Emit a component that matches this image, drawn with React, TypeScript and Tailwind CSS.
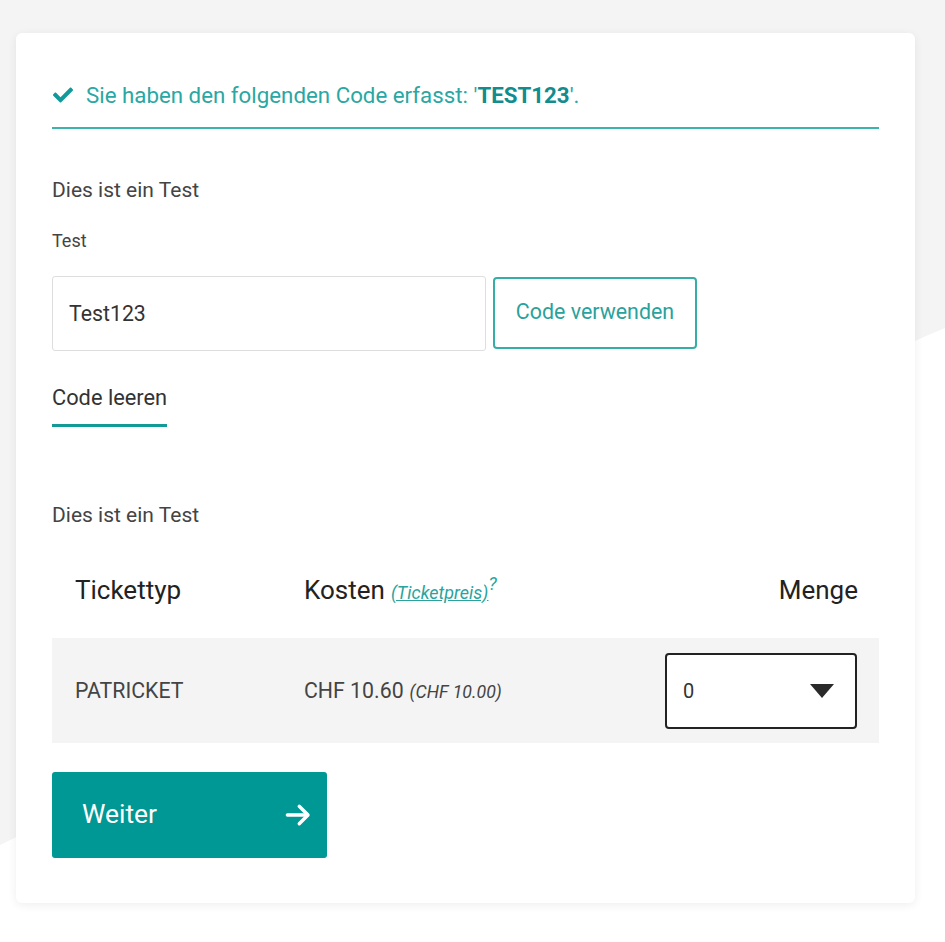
import React from "react";
import { FaCheck } from "react-icons/fa";

export default function App() {
  return (
    <div className="relative w-[945px] h-[942px] overflow-hidden bg-[#f4f4f4]" style={{ fontFamily: "Roboto, 'Liberation Sans', sans-serif" }}>
      <svg className="absolute inset-0" width="945" height="942" viewBox="0 0 945 942">
        <path d="M945 328 C 700 430, 300 700, 0 845 L0 942 L945 942 Z" fill="#ffffff" />
      </svg>
      <div className="relative pt-[33px] pl-[16px]">
        <div className="w-[899px] bg-white rounded-[6px] shadow-[0_2px_10px_rgba(0,0,0,0.07)] px-[36px] pt-[50px] pb-[45px]">
          <div className="flex items-center h-[24px] pl-[1px]">
            <FaCheck className="text-[#12999a] w-[20px] h-[20px] mr-[13px]" />
            <span className="text-[22.3px] leading-[24px] text-[#2aa7a2]">
              Sie haben den folgenden Code erfasst: '<span className="font-bold text-[#128c8c]">TEST123</span>'.
            </span>
          </div>
          <div className="mt-[20px] h-[2px] bg-[#3db3ae]" />
          <div className="mt-[49px] text-[21px] leading-[24px] text-[#444]">Dies ist ein Test</div>
          <div className="mt-[29px] text-[18px] leading-[20px] text-[#444]">Test</div>
          <div className="mt-[25px] flex items-center gap-[7px]">
            <div className="w-[434px] h-[75px] border border-[#dedede] rounded-[3px] flex items-center pl-[16px] text-[21.3px] text-[#333]">
              Test123
            </div>
            <button className="w-[204px] h-[72px] border-2 border-[#35aea8] rounded-[4px] text-[21.4px] text-[#2aa29c] -mt-[2px]">
              Code verwenden
            </button>
          </div>
          <div className="mt-[35px] inline-block pb-[14px] border-b-[3px] border-[#119a96] text-[21.8px] leading-[24px] text-[#333]">
            Code leeren
          </div>
          <div className="mt-[76px] text-[21px] leading-[24px] text-[#444]">Dies ist ein Test</div>
          <div className="mt-[48px] flex items-center h-[30px] pl-[23px] pr-[21px]">
            <div className="w-[229px] text-[26px] text-[#222]">Tickettyp</div>
            <div className="flex-1 flex items-baseline">
              <span className="text-[26px] text-[#222]">Kosten</span>
              <span className="ml-[6px] text-[18px] italic text-[#2aa39d] underline">(Ticketpreis)</span>
              <span className="text-[18px] italic text-[#2aa39d] relative top-[-9px]">?</span>
            </div>
            <div className="text-[26px] text-[#222]">Menge</div>
          </div>
          <div className="mt-[33px] h-[105px] bg-[#f4f4f4] flex items-center pl-[23px] pr-[22px]">
            <div className="w-[229px] text-[21.3px] text-[#444]">PATRICKET</div>
            <div className="flex-1 flex items-baseline text-[#444]">
              <span className="text-[21.3px]">CHF 10.60</span>
              <span className="ml-[6px] text-[17.7px] italic">(CHF 10.00)</span>
            </div>
            <div className="w-[192px] h-[76px] border-2 border-[#222] rounded-[4px] bg-white flex items-center justify-between pl-[16px] pr-[21px]">
              <span className="text-[20px] text-[#333]">0</span>
              <svg width="24" height="14" viewBox="0 0 24 14"><path d="M0 0 L24 0 L12 14 Z" fill="#2a2a2a" /></svg>
            </div>
          </div>
          <button className="mt-[29px] w-[275px] h-[86px] bg-[#009894] rounded-[3px] flex items-center justify-between pl-[30px] pr-[14px] text-white text-[26.4px]">
            <span>Weiter</span>
            <svg width="30" height="30" viewBox="0 0 24 24" fill="none" stroke="white" strokeWidth="2.7" strokeLinecap="round" strokeLinejoin="round">
              <path d="M3.5 12h16" />
              <path d="M13 5l7 7-7 7" />
            </svg>
          </button>
        </div>
      </div>
    </div>
  );
}
